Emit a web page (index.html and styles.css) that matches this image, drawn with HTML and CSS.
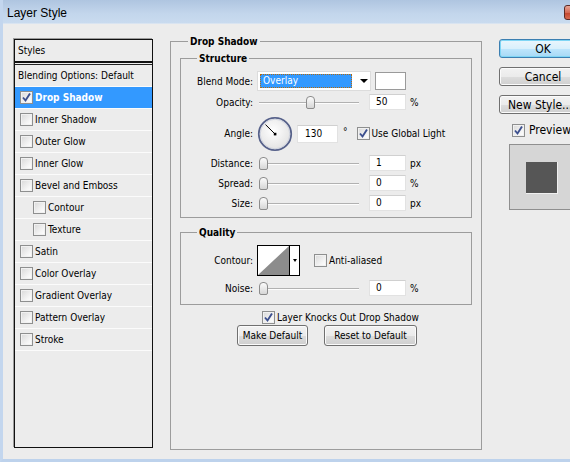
FILE: index.html
```html
<!DOCTYPE html>
<html>
<head>
<meta charset="utf-8">
<title>Layer Style</title>
<link rel="stylesheet" href="styles.css">
</head>
<body>
<div class="window">
  <div class="titlebar">
    <span class="title">Layer Style</span>
    <span class="close"></span>
  </div>
  <div class="body">
    <div class="styles-panel">
      <div class="panel-head">Styles</div>
      <ul class="style-list">
        <li class="row plain">Blending Options: Default</li>
        <li class="row sel"><span class="cb on"><svg viewBox="0 0 11 11"><path d="M2 5.5 L4.5 8.5 L9 1.5"/></svg></span>Drop Shadow</li>
        <li class="row"><span class="cb"></span>Inner Shadow</li>
        <li class="row"><span class="cb"></span>Outer Glow</li>
        <li class="row"><span class="cb"></span>Inner Glow</li>
        <li class="row"><span class="cb"></span>Bevel and Emboss</li>
        <li class="row sub"><span class="cb"></span>Contour</li>
        <li class="row sub"><span class="cb"></span>Texture</li>
        <li class="row"><span class="cb"></span>Satin</li>
        <li class="row"><span class="cb"></span>Color Overlay</li>
        <li class="row"><span class="cb"></span>Gradient Overlay</li>
        <li class="row"><span class="cb"></span>Pattern Overlay</li>
        <li class="row"><span class="cb"></span>Stroke</li>
      </ul>
    </div>

    <fieldset class="group main">
      <legend>Drop Shadow</legend>

      <fieldset class="group inner structure">
        <legend>Structure</legend>
        <div class="frow blend-row">
          <span class="lbl">Blend Mode:</span>
          <div class="select">
            <span class="sel-val">Overlay</span>
            <span class="arrow"></span>
          </div>
          <span class="swatch"></span>
        </div>
        <div class="frow slide-row opacity-row">
          <span class="lbl">Opacity:</span>
          <div class="slider"><span class="thumb" style="margin-left:47px"></span></div>
          <span class="field">50</span>
          <span class="unit">%</span>
        </div>
        <div class="frow angle-row">
          <span class="lbl">Angle:</span>
          <svg class="dial" viewBox="0 0 36 36">
            <defs>
              <radialGradient id="dg" cx="45%" cy="40%" r="60%">
                <stop offset="0" stop-color="#ffffff"/>
                <stop offset="1" stop-color="#e2e2e2"/>
              </radialGradient>
            </defs>
            <circle cx="18" cy="18" r="16.2" fill="url(#dg)" stroke="#56618a" stroke-width="1.8"/>
            <circle cx="18" cy="18" r="14.8" fill="none" stroke="#c9cedc" stroke-width="0.8"/>
            <line x1="18" y1="18" x2="8.5" y2="8.6" stroke="#000" stroke-width="1"/>
            <rect x="16.8" y="16.8" width="2.6" height="2.6" fill="#000"/>
          </svg>
          <span class="field angle-field">130</span>
          <span class="deg">°</span>
          <span class="cb on"><svg viewBox="0 0 11 11"><path d="M2 5.5 L4.5 8.5 L9 1.5"/></svg></span>
          <span class="cb-text">Use Global Light</span>
        </div>
        <div class="frow slide-row">
          <span class="lbl">Distance:</span>
          <div class="slider"><span class="thumb"></span></div>
          <span class="field">1</span>
          <span class="unit">px</span>
        </div>
        <div class="frow slide-row">
          <span class="lbl">Spread:</span>
          <div class="slider"><span class="thumb"></span></div>
          <span class="field">0</span>
          <span class="unit">%</span>
        </div>
        <div class="frow slide-row">
          <span class="lbl">Size:</span>
          <div class="slider"><span class="thumb"></span></div>
          <span class="field">0</span>
          <span class="unit">px</span>
        </div>
      </fieldset>

      <fieldset class="group inner quality">
        <legend>Quality</legend>
        <div class="frow contour-row">
          <span class="lbl">Contour:</span>
          <div class="contour">
            <svg class="curve" viewBox="0 0 31 30" preserveAspectRatio="none">
              <rect width="31" height="30" fill="#fff"/>
              <polygon points="0,30 31,0 31,30" fill="#8c8c8c"/>
            </svg>
            <span class="c-arrow"></span>
          </div>
          <span class="cb aa"></span>
          <span class="cb-text">Anti-aliased</span>
        </div>
        <div class="frow slide-row">
          <span class="lbl">Noise:</span>
          <div class="slider"><span class="thumb"></span></div>
          <span class="field">0</span>
          <span class="unit">%</span>
        </div>
      </fieldset>

      <div class="knock-row">
        <span class="cb on"><svg viewBox="0 0 11 11"><path d="M2 5.5 L4.5 8.5 L9 1.5"/></svg></span>
        <span class="cb-text">Layer Knocks Out Drop Shadow</span>
      </div>
      <div class="default-row">
        <button class="btn make">Make Default</button>
        <button class="btn reset">Reset to Default</button>
      </div>
    </fieldset>

    <div class="actions">
      <button class="btn big ok">OK</button>
      <button class="btn big">Cancel</button>
      <button class="btn big newstyle">New Style...</button>
      <div class="preview-row">
        <span class="cb on"><svg viewBox="0 0 11 11"><path d="M2 5.5 L4.5 8.5 L9 1.5"/></svg></span>
        <span class="preview-text">Preview</span>
      </div>
      <div class="preview-box"><span class="preview-swatch"></span></div>
    </div>
  </div>
</div>
</body>
</html>
```

FILE: styles.css
```css
html, body {
  margin: 0;
  padding: 0;
}
body {
  background: #ececec;
  font-family: "DejaVu Sans", "Liberation Sans", sans-serif;
  font-stretch: condensed;
  font-size: 10px;
  color: #000;
}
.window {
  width: 570px;
  height: 462px;
  box-sizing: border-box;
  border-left: 3px solid #c3d6ee;
  border-bottom: 3px solid #bdd2ec;
  overflow: hidden;
  background: #ececec;
}
.titlebar {
  height: 24px;
  display: flex;
  align-items: center;
  padding-left: 4px;
  background: linear-gradient(#afc5e0, #c3d6ec 60%, #c9dbef);
  border-bottom: 1px solid #d9e4f1;
  box-sizing: border-box;
}
.title {
  font-family: "Liberation Sans", sans-serif;
  font-stretch: normal;
  font-size: 12px;
  color: #000;
  padding-top: 3px;
}
.close {
  margin-left: auto;
  margin-right: -37px;
  width: 43px;
  height: 15px;
  margin-top: 2px;
  border: 1px solid #5d2b25;
  border-radius: 3px;
  background: linear-gradient(#e7a595, #d46a55 50%, #c2452d 51%, #d76a50);
  box-sizing: border-box;
}
.body {
  display: flex;
  align-items: flex-start;
  padding: 11px 0 0 11px;
}

/* left list */
.styles-panel {
  margin-top: 4px;
  width: 139px;
  height: 409px;
  box-sizing: border-box;
  border: 1px solid #111;
  box-shadow: -1px -1px 0 #9c9c9c;
  flex-shrink: 0;
  background: #ececec;
}
.panel-head {
  height: 21px;
  line-height: 21px;
  padding-left: 3px;
  border-bottom: 2px solid #111;
}
.style-list {
  list-style: none;
  margin: 1px 0 0 0;
  padding: 0;
  border-top: 1px solid #222;
}
.row {
  height: 22px;
  box-sizing: border-box;
  border-bottom: 1px solid #fbfbfb;
  display: flex;
  align-items: center;
  padding-left: 5px;
  white-space: nowrap;
}
.row.plain {
  padding-left: 3px;
}
.row.sub {
  padding-left: 18px;
}
.row .cb {
  margin-right: 2px;
}
.row.sel {
  background: #3399ff;
  color: #fff;
  font-weight: bold;
}

/* checkbox */
.cb {
  width: 13px;
  height: 13px;
  box-sizing: border-box;
  border: 1px solid #8e8f8f;
  background: linear-gradient(135deg, #d8d8d8, #f6f6f6 70%, #fff);
  box-shadow: inset 0 0 0 1px #f1f1f1;
  flex-shrink: 0;
  display: inline-flex;
  align-items: center;
  justify-content: center;
}
.cb svg {
  width: 11px;
  height: 11px;
}
.cb svg path {
  fill: none;
  stroke: #3c4f8e;
  stroke-width: 1.9;
}

/* group boxes */
.group {
  margin: 0;
  padding: 0;
  border: 1px solid #9c9c9c;
  min-width: 0;
  box-sizing: border-box;
}
.group legend {
  font-weight: bold;
  line-height: 13px;
  padding: 0 2px;
  margin-left: 17px;
}
.main {
  margin-left: 17px;
  width: 312px;
  height: 415px;
  flex-shrink: 0;
}
.inner {
  margin: 4px 0 0 9px;
  width: 292px;
}
.inner legend {
  margin-left: 16px;
}
.structure {
  height: 166px;
}
.quality {
  margin-top: 8px;
  height: 79px;
}

.frow {
  display: flex;
  align-items: center;
}
.lbl {
  width: 72px;
  text-align: right;
  flex-shrink: 0;
  white-space: nowrap;
}
.blend-row {
  margin-top: 6px;
  height: 20px;
}
.select {
  margin-left: 4px;
  width: 114px;
  height: 20px;
  box-sizing: border-box;
  background: #fff;
  border: 1px solid #dcdcdc;
  display: flex;
  align-items: center;
  padding-left: 2px;
}
.sel-val {
  width: 92px;
  height: 14px;
  box-sizing: border-box;
  background: #3399ff;
  color: #fff;
  border: 1px dotted #b36a10;
  line-height: 12px;
  padding-left: 2px;
}
.arrow {
  margin-left: 8px;
  width: 0;
  height: 0;
  border-left: 4px solid transparent;
  border-right: 4px solid transparent;
  border-top: 4px solid #000;
}
.swatch {
  margin-left: 4px;
  width: 31px;
  height: 18px;
  box-sizing: border-box;
  background: #fff;
  border: 1px solid #9a9a9a;
}
.slide-row {
  height: 16px;
  margin-top: 4px;
}
.opacity-row.slide-row {
  margin-top: 3px;
}
.slider {
  margin-left: 6px;
  width: 100px;
  height: 13px;
  display: flex;
  align-items: center;
  background: linear-gradient(to bottom, transparent 6px, #b1b1b1 6px, #b1b1b1 7px, #fdfdfd 7px, #fdfdfd 8px, transparent 8px);
}
.thumb {
  width: 9px;
  height: 13px;
  box-sizing: border-box;
  border: 1px solid #8c8c8c;
  border-radius: 4px 4px 2px 2px;
  background: linear-gradient(#fbfbfb, #e9e9e9 50%, #d6d6d6);
}
.field {
  margin-left: 10px;
  width: 37px;
  height: 16px;
  box-sizing: border-box;
  background: #fff;
  border: 1px solid #e2e2e2;
  border-top-color: #d0d0d0;
  line-height: 14px;
  padding-left: 6px;
}
.unit {
  margin-left: 4px;
}
.angle-row {
  margin-top: 6px;
  height: 35px;
}
.dial {
  margin-left: 4px;
  width: 36px;
  height: 36px;
}
.angle-field {
  margin-left: 4px;
  width: 41px;
  height: 18px;
  line-height: 16px;
  padding-left: 7px;
}
.deg {
  margin-left: 5px;
  margin-top: -4px;
}
.angle-row .cb {
  margin-left: 9px;
}
.cb-text {
  margin-left: 2px;
  white-space: nowrap;
}

.contour-row {
  margin-top: 6px;
  height: 31px;
}
.contour {
  margin-left: 4px;
  width: 43px;
  height: 31px;
  box-sizing: border-box;
  border: 1px solid #000;
  background: #fff;
  display: flex;
  align-items: center;
}
.curve {
  width: 31px;
  height: 29px;
  border-right: 1px solid #000;
  flex-shrink: 0;
}
.c-arrow {
  margin-left: 3px;
  width: 0;
  height: 0;
  border-left: 2.5px solid transparent;
  border-right: 2.5px solid transparent;
  border-top: 3px solid #000;
}
.aa {
  margin-left: 14px;
}

.knock-row {
  margin: 6px 0 0 91px;
  height: 13px;
  display: flex;
  align-items: center;
}
.default-row {
  margin: 1px 0 0 66px;
  display: flex;
  gap: 16px;
}
.btn {
  font-family: inherit;
  font-stretch: condensed;
  font-size: 10px;
  color: #000;
  height: 21px;
  box-sizing: border-box;
  border: 1px solid #707070;
  border-radius: 3px;
  background: linear-gradient(#f2f2f2, #ebebeb 50%, #dddddd 51%, #cfcfcf);
  box-shadow: inset 0 0 0 1px #fbfbfb;
  padding: 0;
}
.make {
  width: 71px;
}
.reset {
  width: 93px;
}

.actions {
  margin: 4px 0 0 17px;
  width: 90px;
  flex-shrink: 0;
  display: flex;
  flex-direction: column;
  align-items: flex-start;
}
.btn.big {
  width: 88px;
  height: 19px;
  font-size: 12px;
  margin-bottom: 9px;
  text-align: center;
  white-space: nowrap;
}
.btn.ok {
  border-color: #3c7fb1;
  box-shadow: inset 0 0 0 1px #7fd6f5;
  background: linear-gradient(#eaf6fd, #d9f0fc 50%, #bee6fd 51%, #a7d9f5);
}
.btn.newstyle {
  text-align: left;
  padding-left: 8px;
  margin-bottom: 0;
}
.preview-row {
  margin: 9px 0 0 13px;
  display: flex;
  align-items: center;
}
.preview-text {
  margin-left: 4px;
  font-size: 12px;
}
.preview-box {
  margin: 7px 0 0 10px;
  width: 80px;
  height: 66px;
  box-sizing: border-box;
  border: 1px solid #8f8f8f;
  background: #d6d6d6;
  padding: 17px 0 0 16px;
}
.preview-swatch {
  display: block;
  width: 32px;
  height: 32px;
  box-sizing: border-box;
  background: #565656;
  border-right: 1px solid #f0f0f0;
  border-bottom: 1px solid #f0f0f0;
}
```
